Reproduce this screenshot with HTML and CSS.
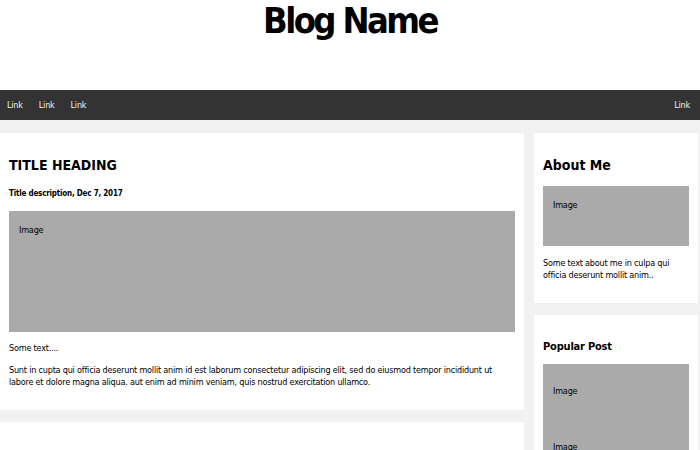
FILE: index.html
```html
<!DOCTYPE html>
<html>
<head>
<meta charset="utf-8">
<link rel="stylesheet" href="styles.css">
</head>
<body>
<div class="header">
  <h1>Blog Name</h1>
</div>
<div class="topnav">
  <a href="#">Link</a>
  <a href="#">Link</a>
  <a href="#">Link</a>
  <a href="#" class="right">Link</a>
</div>
<div class="row">
  <div class="leftcolumn">
    <div class="card">
      <h2>TITLE HEADING</h2>
      <h5>Title description, Dec 7, 2017</h5>
      <div class="fakeimg tall"><p>Image</p></div>
      <p class="text">Some text....</p>
      <p class="text">Sunt in cupta qui officia deserunt mollit anim id est laborum consectetur adipiscing elit, sed do eiusmod tempor incididunt ut labore et dolore magna aliqua. aut enim ad minim veniam, quis nostrud exercitation ullamco.</p>
    </div>
    <div class="card empty"></div>
  </div>
  <div class="rightcolumn">
    <div class="card">
      <h2>About Me</h2>
      <div class="fakeimg short"><p>Image</p></div>
      <p class="text about">Some text about me in culpa qui officia deserunt mollit anim..</p>
    </div>
    <div class="card">
      <h3>Popular Post</h3>
      <div class="fakeimg pop"><p>Image</p></div>
      <div class="fakeimg pop"><p>Image</p></div>
    </div>
  </div>
</div>
</body>
</html>
```
FILE: styles.css
```css
html, body {
  margin: 0;
  padding: 0;
}
body {
  background: #f1f1f1;
  font-family: "DejaVu Sans Condensed", "DejaVu Sans", sans-serif;
  font-stretch: condensed;
  color: #000;
  overflow: hidden;
  height: 450px;
  letter-spacing: -0.2px;
}
.header {
  background: #fff;
  height: 90px;
  text-align: center;
}
.header h1 {
  margin: 0;
  font-size: 36px;
  line-height: 42px;
  font-weight: bold;
  letter-spacing: -2.6px;
}
.topnav {
  background: #333;
  height: 30px;
  display: flex;
  align-items: center;
  padding: 0 2px 0 0;
}
.topnav a {
  color: #f2f2f2;
  text-decoration: none;
  font-size: 9px;
  padding: 0 8px 0 7px;
}
.topnav a + a {
  padding-left: 8px;
}
.topnav a.right {
  margin-left: auto;
}
.row {
  display: flex;
  gap: 10px;
  padding: 1px 2px 0 0;
}
.leftcolumn {
  flex: 0 0 524px;
}
.rightcolumn {
  flex: 1 1 auto;
}
.card {
  background: #fff;
  padding: 9px 9px 0 9px;
  margin-top: 12px;
  overflow: hidden;
}
.card.empty {
  height: 60px;
}
.card h2 {
  font-size: 14px;
  font-weight: bold;
  margin: 13px 0 0 0;
  line-height: 20px;
  letter-spacing: 0;
}
.card h3 {
  font-size: 11px;
  font-weight: bold;
  margin: 15px 0 0 0;
  line-height: 16px;
}
.card h5 {
  font-size: 8px;
  font-weight: bold;
  margin: 13px 0 0 0;
  line-height: 12px;
}
.fakeimg {
  background: #aaa;
  padding: 0 10px;
  overflow: hidden;
}
.fakeimg p {
  font-size: 9px;
  line-height: 12px;
  margin: 13px 0 0 0;
}
.fakeimg.tall {
  height: 121px;
  margin-top: 11px;
}
.fakeimg.short {
  height: 60px;
  margin-top: 11px;
}
.fakeimg.pop {
  height: 56px;
}
.fakeimg.pop:first-of-type {
  margin-top: 9px;
}
.fakeimg.pop p {
  margin-top: 21px;
}
.text {
  font-size: 9px;
  line-height: 12px;
  margin: 10px 0 0 0;
}
.card .text:last-child {
  margin-bottom: 22px;
}
.card .text.about {
  margin-top: 11px;
  margin-bottom: 22px;
}
```
